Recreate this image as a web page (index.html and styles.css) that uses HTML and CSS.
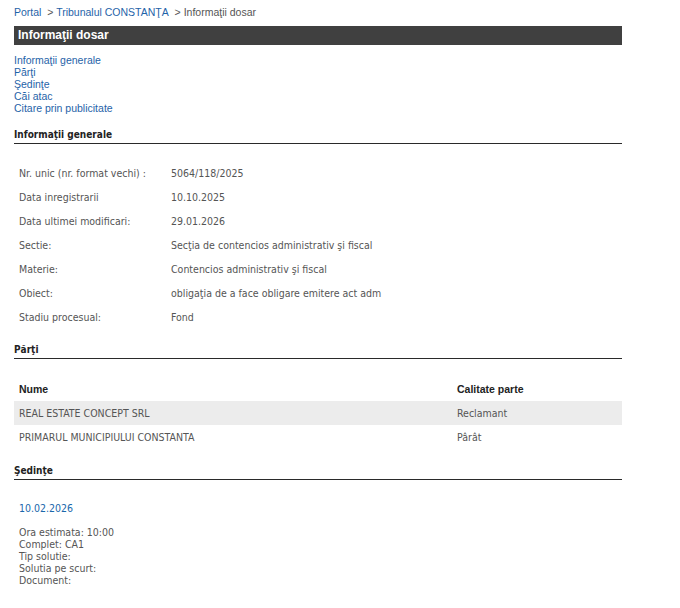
FILE: index.html
```html
<!DOCTYPE html>
<html lang="ro">
<head>
<meta charset="utf-8">
<title>Informaţii dosar</title>
<link rel="stylesheet" href="styles.css">
</head>
<body>
<div class="page">
  <div class="crumbs"><a href="#">Portal</a>&nbsp; &gt; <a href="#">Tribunalul CONSTANŢA</a>&nbsp; &gt; <span>Informaţii dosar</span></div>
  <h1 class="titlebar">Informaţii dosar</h1>
  <ul class="toc">
    <li><a href="#">Informaţii generale</a></li>
    <li><a href="#">Părţi</a></li>
    <li><a href="#">Şedinţe</a></li>
    <li><a href="#">Căi atac</a></li>
    <li><a href="#">Citare prin publicitate</a></li>
  </ul>

  <h2 class="section">Informaţii generale</h2>
  <table class="info">
    <tr><td class="lbl">Nr. unic (nr. format vechi) :</td><td>5064/118/2025</td></tr>
    <tr><td class="lbl">Data inregistrarii</td><td>10.10.2025</td></tr>
    <tr><td class="lbl">Data ultimei modificari:</td><td>29.01.2026</td></tr>
    <tr><td class="lbl">Sectie:</td><td>Secţia de contencios administrativ şi fiscal</td></tr>
    <tr><td class="lbl">Materie:</td><td>Contencios administrativ şi fiscal</td></tr>
    <tr><td class="lbl">Obiect:</td><td>obligaţia de a face obligare emitere act adm</td></tr>
    <tr><td class="lbl">Stadiu procesual:</td><td>Fond</td></tr>
  </table>

  <h2 class="section">Părţi</h2>
  <table class="parti">
    <colgroup><col class="c-name"><col class="c-role"></colgroup>
    <tr class="head"><th>Nume</th><th>Calitate parte</th></tr>
    <tr class="alt"><td>REAL ESTATE CONCEPT SRL</td><td>Reclamant</td></tr>
    <tr><td>PRIMARUL MUNICIPIULUI CONSTANTA</td><td>Pârât</td></tr>
  </table>

  <h2 class="section sed">Şedinţe</h2>
  <div class="sedinta">
    <div class="date">10.02.2026</div>
    <div class="details">
      <div>Ora estimata: 10:00</div>
      <div>Complet: CA1</div>
      <div>Tip solutie:</div>
      <div>Solutia pe scurt:</div>
      <div>Document:</div>
    </div>
  </div>
</div>
</body>
</html>
```
FILE: styles.css
```css
html, body {
  margin: 0;
  padding: 0;
  background: #fff;
}
.page {
  width: 608px;
  padding: 5px 0 0 14px;
  font-family: "Liberation Sans", Arial, sans-serif;
  font-size: 10.5px;
  color: #333;
}
a {
  color: #1f63a8;
  text-decoration: none;
}
.crumbs {
  height: 14px;
  line-height: 14px;
  color: #555;
}
.titlebar {
  margin: 7px 0 0 0;
  height: 19px;
  line-height: 19px;
  background: #404040;
  color: #fff;
  font-size: 12px;
  font-weight: bold;
  padding-left: 4px;
}
.toc {
  list-style: none;
  margin: 9px 0 0 0;
  padding: 0;
}
.toc li {
  line-height: 12px;
  height: 12px;
}
.section {
  margin: 14px 0 0 0;
  font-size: 10px;
  font-weight: bold;
  color: #222;
  line-height: 14px;
  padding-bottom: 1px;
  border-bottom: 1px solid #2a2a2a;
  font-family: "DejaVu Sans Condensed", Tahoma, sans-serif;
}
.section.sed {
  margin-top: 15px;
}
.info {
  border-collapse: collapse;
  margin-top: 17px;
  font-family: "DejaVu Sans Condensed", Tahoma, sans-serif;
  font-size: 10.5px;
  color: #555;
}
.info td {
  height: 24px;
  padding: 0 0 0 5px;
  vertical-align: middle;
}
.info td.lbl {
  width: 147px;
}
.parti {
  width: 100%;
  table-layout: fixed;
  border-collapse: collapse;
  margin-top: 17px;
  font-family: "DejaVu Sans Condensed", Tahoma, sans-serif;
  font-size: 10.5px;
  color: #555;
}
.parti col.c-name {
  width: 438px;
}
.parti th {
  text-align: left;
  font-family: "Liberation Sans", Arial, sans-serif;
  font-size: 10.5px;
  font-weight: bold;
  color: #222;
  height: 25px;
  padding: 0 0 0 5px;
}
.parti td {
  height: 24px;
  padding: 0 0 0 5px;
}
.parti tr.alt td {
  background: #ececec;
}
.sedinta {
  padding: 21px 0 0 5px;
  font-family: "DejaVu Sans Condensed", Tahoma, sans-serif;
  font-size: 10.5px;
  color: #555;
}
.sedinta .date {
  color: #1a67ab;
  line-height: 14px;
}
.sedinta .details {
  margin-top: 11px;
  line-height: 12px;
}
```
